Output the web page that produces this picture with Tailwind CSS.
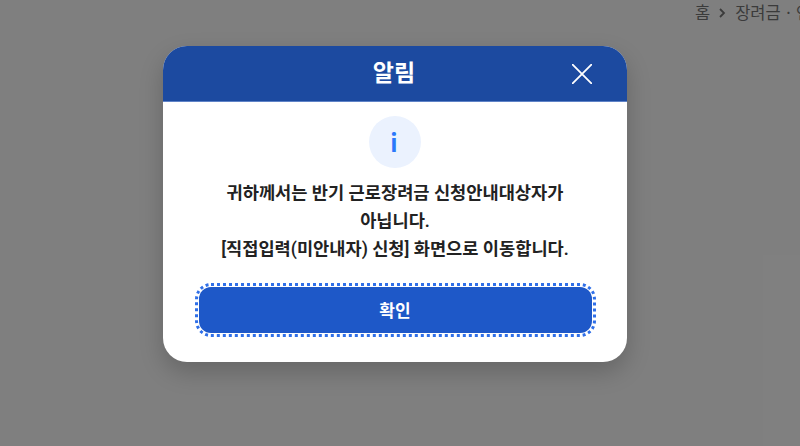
<!DOCTYPE html>
<html lang="ko">
<head>
<meta charset="utf-8">
<script src="https://cdn.jsdelivr.net/npm/@tailwindcss/browser@4"></script>
</head>
<body class="m-0 overflow-hidden">
<div class="relative w-[800px] h-[446px] bg-white overflow-hidden font-['Noto_Sans_CJK_KR','Noto_Sans',sans-serif]">
  <div class="flex justify-start items-center h-[25px] pl-[695px] whitespace-nowrap text-[16.5px] text-[#777]">
    <span class="shrink-0">홈</span>
    <svg class="shrink-0 ml-[9px] mr-[9px]" width="7" height="10" viewBox="0 0 7 10" fill="none" stroke="#777" stroke-width="1.8"><path d="M1 1l4 4-4 4"/></svg>
    <span class="shrink-0">장려금ㆍ연금</span>
  </div>
  <div class="absolute inset-0 bg-black/50 flex justify-center items-start pt-[46px] pr-[10px]">
    <div class="w-[464px] h-[316px] rounded-[24px] bg-white overflow-hidden shadow-[0_10px_25px_rgba(0,0,0,0.2)] flex flex-col">
      <div class="relative h-[55px] bg-[#1c4aa0] border-b border-[#5f83c7] flex items-center justify-center shrink-0 box-content">
        <span class="text-white text-[23px] font-bold leading-none pr-[2px] pb-[4px]">알림</span>
        <button class="absolute left-[409px] top-[18px] w-[20px] h-[20px]">
          <svg class="block" width="20" height="20" viewBox="0 0 20 20" fill="none" stroke="white" stroke-width="1.8"><path d="M0 0L20 20M20 0L0 20"/></svg>
        </button>
      </div>
      <div class="flex flex-col items-center pt-[14px]">
        <div class="w-[52px] h-[52px] rounded-full bg-[#ebf2fe] flex items-center justify-center">
          <span class="text-[#2a78fa] text-[24px] font-bold leading-none pr-[2px]">i</span>
        </div>
        <p class="mt-[11px] w-[370px] text-center text-[17.6px] leading-[28px] font-semibold text-[#222] font-['Roboto','Noto_Sans_CJK_KR',sans-serif]">귀하께서는 반기 근로장려금 신청안내대상자가<br>아닙니다.<br>[직접입력(미안내자) 신청] 화면으로 이동합니다.</p>
        <button class="mt-[24px] w-[393px] h-[46px] rounded-[12px] bg-[#1e58c8] text-white text-[17px] font-bold outline-[3px] outline-dotted outline-[#2f6fe8] outline-offset-[1px]">확인</button>
      </div>
    </div>
  </div>
</div>
</body>
</html>
